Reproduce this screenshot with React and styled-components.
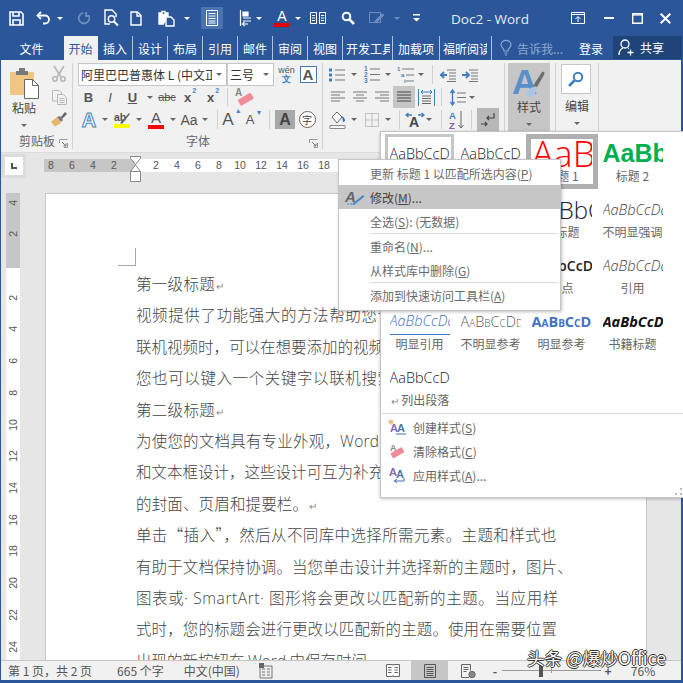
import styled, { createGlobalStyle } from 'styled-components';

const GlobalStyle = createGlobalStyle`
  html, body { margin: 0; padding: 0; background: #fff; }
  body { font-family: "Noto Sans CJK SC", "Liberation Sans", sans-serif; }
  * { box-sizing: border-box; }
`;

const Frame = styled.div`
  width: 683px;
  height: 683px;
  background: #2b579a;
  display: flex;
  flex-direction: column;
  position: relative;
  overflow: hidden;
`;

const TitleBar = styled.div`
  height: 36px;
  display: flex;
  align-items: center;
  flex: none;
`;
const Qat = styled.div`
  width: 430px;
  height: 100%;
  display: flex;
  align-items: center;
`;
const Slot = styled.span`
  width: ${p => p.$w}px;
  height: 22px;
  flex: none;
  display: flex;
  align-items: center;
  justify-content: center;
  background: ${p => (p.$on ? '#4a74b0' : 'none')};
`;
const WhiteCaret = styled.i`
  width: 0;
  height: 0;
  border-left: 3px solid transparent;
  border-right: 3px solid transparent;
  border-top: 3px solid ${p => p.$c || '#fff'};
`;
const DocTitle = styled.div`
  width: 120px;
  text-align: center;
  font: 13.5px "Open Sans", "Liberation Sans", sans-serif;
  color: #e6ecf5;
  padding-top: 1px;
`;
const WinControls = styled.div`
  margin-left: auto;
  display: flex;
  align-items: center;
`;

const TabBar = styled.div`
  height: 24px;
  display: flex;
  flex: none;
  align-items: stretch;
`;
const Tab = styled.div`
  width: ${p => p.$w}px;
  flex: none;
  overflow: hidden;
  white-space: nowrap;
  display: flex;
  align-items: center;
  justify-content: ${p => (p.$clip ? 'flex-start' : 'center')};
  padding-left: ${p => (p.$clip ? 3 : 0)}px;
  font-size: 12px;
  color: ${p => (p.$active ? '#2b579a' : '#fff')};
  background: ${p => (p.$active ? '#f1f1f1' : 'none')};
  border-right: 1px solid ${p => (p.$sep ? 'rgba(255,255,255,.65)' : 'transparent')};
`;
const TabClip = styled.span`
  width: 44px;
  overflow: hidden;
  flex: none;
`;
const TellMe = styled.div`
  margin-left: 8px;
  display: flex;
  align-items: center;
  gap: 5px;
  width: 79px;
  font-size: 12px;
  color: #8ea9d0;
`;
const SignIn = styled.div`
  width: 34px;
  display: flex;
  align-items: center;
  font-size: 12px;
  color: #fff;
`;
const Share = styled.div`
  width: 69px;
  margin-bottom: 1px;
  background: #1f4478;
  display: flex;
  align-items: center;
  gap: 5px;
  padding-left: 5px;
  font-size: 12px;
  color: #fff;
`;

const Body = styled.div`
  flex: 1;
  min-height: 0;
  margin: 0 2px 3px 1px;
  display: flex;
  flex-direction: column;
`;

const Ribbon = styled.div`
  height: 93px;
  flex: none;
  background: #f1f1f1;
  display: flex;
  border-bottom: 1px solid #dcdcdc;
`;
const Group = styled.div`
  width: ${p => p.$w}px;
  flex: none;
  display: flex;
  flex-direction: column;
  padding-top: 3px;
  position: relative;
  &::after {
    content: "";
    position: absolute;
    right: 0;
    top: 3px;
    bottom: 3px;
    width: 1px;
    background: #d2d2d2;
  }
`;
const GroupBody = styled.div`
  height: 68px;
  display: flex;
`;
const GroupLabel = styled.div`
  flex: 1;
  display: flex;
  align-items: center;
  justify-content: center;
  font-size: 12px;
  color: #666;
  padding-bottom: 2px;
  position: relative;
`;
const Launcher = styled.span`
  position: absolute;
  right: 5px;
  bottom: 4px;
  display: flex;
`;
const BigButton = styled.div`
  width: ${p => p.$w}px;
  height: ${p => p.$h || 68}px;
  flex: none;
  display: flex;
  flex-direction: column;
  align-items: center;
  padding-top: ${p => p.$pt || 0}px;
  font-size: 12px;
  color: #555;
  background: ${p => (p.$on ? '#c6c6c6' : 'none')};
`;
const BigLabel = styled.span`
  line-height: 16px;
  margin-top: ${p => p.$mt || 0}px;
  margin-bottom: 8px;
  color: #444;
`;
const SmallStack = styled.div`
  display: flex;
  flex-direction: column;
`;
const StackSlot = styled.span`
  width: 24px;
  height: 23px;
  display: flex;
  align-items: center;
  justify-content: center;
`;
const Rows = styled.div`
  display: flex;
  flex-direction: column;
  padding-left: ${p => p.$pl}px;
`;
const Row = styled.div`
  height: ${p => p.$h || 23}px;
  display: flex;
  align-items: stretch;
`;
const Tool = styled.span`
  width: ${p => p.$w}px;
  flex: none;
  display: flex;
  align-items: center;
  justify-content: center;
  background: ${p => p.$on || 'none'};
`;
const Sep = styled.i`
  width: 1px;
  flex: none;
  background: #d0d0d0;
  margin: 2px 0;
`;
const Caret = styled.i`
  width: 0;
  height: 0;
  flex: none;
  border-left: 3px solid transparent;
  border-right: 3px solid transparent;
  border-top: 3px solid #666;
`;
const Combo = styled.div`
  width: ${p => p.$w}px;
  flex: none;
  background: #fff;
  border: 1px solid #c6c6c6;
  display: flex;
  align-items: center;
  padding: 0 4px 0 2px;
  font-size: 12px;
  color: #333;
  white-space: nowrap;
  overflow: hidden;
  justify-content: space-between;
`;
const ComboText = styled.span`
  overflow: hidden;
  width: ${p => p.$w}px;
  flex: none;
`;
const Letter = styled.span`
  font: ${p => (p.$i ? 'italic ' : '')}${p => p.$b || 700} ${p => p.$s || 13}px "Liberation Sans", sans-serif;
  color: ${p => p.$c || '#555'};
  text-decoration: ${p => p.$d || 'none'};
  line-height: 1;
  display: inline-flex;
`;
const EffectLetter = styled.span`
  font: 700 20px "Liberation Sans", sans-serif;
  line-height: 1;
  color: #fff;
  -webkit-text-stroke: 1px #4a86c5;
  text-shadow: 0 0 2px #a9c8e8;
`;
const Sub = styled.sub`
  font-size: 7px;
  font-weight: 700;
  color: #4a86c5;
  vertical-align: ${p => (p.$up ? '5px' : '-1px')};
  line-height: 0;
  margin-left: 1px;
`;
const Ruby = styled.span`
  display: flex;
  flex-direction: column;
  align-items: center;
  line-height: 9px;
  font-size: 9px;
  color: #555;
  font-family: "Liberation Sans", sans-serif;
`;
const RubyBase = styled.span`
  color: #3f7fc0;
  font-weight: 700;
`;
const BoxA = styled.span`
  width: 17px;
  height: 17px;
  border: 1px solid #4a7ab0;
  background: #fff;
  display: flex;
  align-items: center;
  justify-content: center;
  font: 700 15px "Liberation Sans", sans-serif;
  color: #555;
`;
const ShadeA = styled(BoxA)`
  width: 20px;
  height: 19px;
  border: none;
  background: #a8a8a8;
  font-size: 16px;
  color: #444;
`;
const CircleChar = styled.span`
  width: 17px;
  height: 17px;
  border: 1px solid #666;
  border-radius: 50%;
  background: #fff;
  font-size: 10px;
  display: flex;
  align-items: center;
  justify-content: center;
  color: #444;
  flex: none;
`;
const BarLetter = styled.span`
  width: 16px;
  display: flex;
  flex-direction: column;
  align-items: center;
  line-height: 1;
`;
const Bar = styled.i`
  width: ${p => p.$w || 16}px;
  height: 4px;
  background: ${p => p.$c};
  flex: none;
`;
const EditBox = styled.span`
  width: 30px;
  height: 30px;
  margin: 1px 0 0 -2px;
  background: #fff;
  border: 1px solid #c6c6c6;
  display: flex;
  align-items: center;
  justify-content: center;
  flex: none;
`;

const Editor = styled.div`
  flex: 1;
  min-height: 0;
  background: #e6e6e6;
  position: relative;
  overflow: hidden;
`;
const RulerTop = styled.div`
  height: 40px;
  display: flex;
  padding-top: 1px;
`;
const Corner = styled.div`
  width: 25px;
  height: 24px;
  background: #dcdcdc;
  display: flex;
  align-items: center;
  justify-content: center;
  flex: none;
`;
const CornerInner = styled.div`
  width: 18px;
  height: 18px;
  background: #fff;
  display: flex;
  align-items: center;
  justify-content: center;
`;
const TabMark = styled.i`
  width: 6px;
  height: 6px;
  border-left: 2px solid #555;
  border-bottom: 2px solid #555;
`;
const HRuler = styled.div`
  margin: 5px 0 0 18px;
  width: 603px;
  height: 13px;
  background: linear-gradient(90deg, #c6c6c6 91px, #fff 91px);
  display: flex;
  position: relative;
`;
const HRulerNums = styled.div`
  margin-left: -3.5px;
  display: flex;
`;
const RulerNum = styled.span`
  width: 21px;
  flex: none;
  text-align: center;
  font: 10.5px/13px "Liberation Sans", sans-serif;
  color: #555;
`;
const IndentMark = styled.span`
  position: absolute;
  left: 86px;
  top: -3px;
  display: flex;
`;
const Workspace = styled.div`
  display: flex;
  height: 100%;
`;
const VRuler = styled.div`
  margin-left: 5px;
  width: 14px;
  height: 500px;
  flex: none;
  overflow: hidden;
  background: linear-gradient(180deg, #c6c6c6 75px, #fff 75px);
  display: flex;
  flex-direction: column;
`;
const VRulerNum = styled.span`
  height: 31.72px;
  flex: none;
  margin-top: ${p => p.$mt || 0}px;
  display: flex;
  align-items: center;
  justify-content: center;
  writing-mode: vertical-rl;
  transform: rotate(180deg);
  font: 10.5px "Liberation Sans", sans-serif;
  color: #555;
`;
const Page = styled.div`
  margin-left: 25px;
  width: 602px;
  height: 500px;
  flex: none;
  background: #fff;
  border: 1px solid #c6c6c6;
  border-bottom: none;
  padding-left: 90px;
  overflow: hidden;
`;
const CropMark = styled.div`
  margin: 54px 0 2px -18px;
  width: 18px;
  height: 18px;
  border-right: 1px solid #a8a8a8;
  border-bottom: 1px solid #a8a8a8;
`;
const Line = styled.div`
  height: 31.4px;
  line-height: 31.4px;
  font-size: 15.5px;
  font-weight: 300;
  letter-spacing: ${p => p.$ls || 0}px;
  color: #444;
  white-space: nowrap;
`;
const Latin = styled.span`
  font-family: "Open Sans", "Liberation Sans", sans-serif;
  font-weight: 300;
`;
const Para = styled.span`
  font-size: 10px;
  color: #888;
  margin-left: 1px;
`;

const Status = styled.div`
  height: 20px;
  flex: none;
  background: #f1f1f1;
  border-top: 1px solid #c6c6c6;
  display: flex;
  align-items: stretch;
  font-size: 12px;
  color: #555;
`;
const StatusText = styled.span`
  margin-left: ${p => p.$ml}px;
  display: flex;
  align-items: center;
  white-space: nowrap;
  flex: none;
`;
const StatusRight = styled.div`
  margin-left: auto;
  display: flex;
  align-items: stretch;
`;
const ViewBtn = styled.span`
  width: ${p => p.$w}px;
  display: flex;
  align-items: center;
  justify-content: center;
  padding-right: ${p => p.$pr || 0}px;
  background: ${p => (p.$on ? '#c6c6c6' : 'none')};
  font-weight: ${p => (p.$bold ? 700 : 400)};
`;
const Slider = styled.span`
  width: 99px;
  position: relative;
  display: flex;
  align-items: center;
`;
const Track = styled.i`
  width: 100%;
  height: 1px;
  background: #999;
`;
const Thumb = styled.i`
  position: absolute;
  left: 37px;
  top: 3px;
  width: 4px;
  height: 13px;
  background: #555;
`;
const Tick = styled.i`
  position: absolute;
  left: 49px;
  top: 7px;
  width: 1px;
  height: 5px;
  background: #999;
`;
const Watermark = styled.div`
  position: absolute;
  left: 527px;
  top: 646px;
  font-size: 17.5px;
  line-height: 24px;
  letter-spacing: .1px;
  color: #fff;
  white-space: nowrap;
  text-shadow: 1px 0 0 #333, -1px 0 0 #333, 0 1px 0 #333, 0 -1px 0 #333;
`;

const Gallery = styled.div`
  position: absolute;
  left: 380px;
  top: 131px;
  width: 303px;
  height: 367px;
  background: #fff;
  border: 1px solid #c6c6c6;
  border-right: none;
  box-shadow: 0 1px 3px rgba(0, 0, 0, .25);
  padding: 2px 0 0 4px;
`;
const StyleGrid = styled.div`
  display: grid;
  grid-template-columns: repeat(4, 71px);
  grid-auto-rows: 56px;
`;
const StyleItem = styled.div`
  width: ${p => (p.$sel === 'dark' ? 72 : 69)}px;
  height: 55px;
  border: ${p => (p.$sel === 'dark' ? '5px solid #b0b0b0' : p.$sel === 'light' ? '3px solid #c6c6c6' : '3px solid transparent')};
  margin-left: ${p => (p.$sel === 'dark' ? -1 : 0)}px;
  display: flex;
  flex-direction: column;
  align-items: center;
  padding-top: ${p => (p.$sel === 'dark' ? 0 : 2)}px;
`;
const Sample = styled.div`
  width: 60px;
  height: 28px;
  flex: none;
  overflow: hidden;
  white-space: nowrap;
  display: flex;
  align-items: center;
  font-family: ${p => p.$font || '"Open Sans"'}, "Liberation Sans", sans-serif;
  font-size: ${p => p.$s || 14.5}px;
  font-weight: ${p => p.$b || 300};
  font-style: ${p => (p.$i ? 'italic' : 'normal')};
  font-variant: ${p => (p.$caps ? 'small-caps' : 'normal')};
  color: ${p => p.$c || '#222'};
  border-bottom: ${p => (p.$ul ? '1px solid #4472c4' : 'none')};
`;
const StyleLabel = styled.div`
  font-size: 12px;
  line-height: 17px;
  color: #666;
  white-space: nowrap;
`;
const GalleryMenu = styled.div`
  margin: -1px 0 0 -4px;
  border-top: 1px solid #d9d9d9;
  padding-top: 1px;
`;
const GalleryEntry = styled.div`
  height: 24px;
  display: flex;
  align-items: center;
  font-size: 12px;
  color: #666;
`;
const EntryIcon = styled.span`
  width: 32px;
  display: flex;
  justify-content: center;
  flex: none;
`;
const Grip = styled.span`
  position: absolute;
  right: 1px;
  bottom: 2px;
  display: flex;
`;

const ContextMenu = styled.div`
  position: absolute;
  left: 338px;
  top: 159px;
  width: 223px;
  height: 152px;
  background: #fff;
  border: 1px solid #c6c6c6;
  box-shadow: 1px 1px 3px rgba(0, 0, 0, .25);
  padding-top: 1px;
`;
const MenuItem = styled.div`
  height: 24px;
  display: flex;
  align-items: center;
  font-size: 12px;
  color: ${p => (p.$on ? '#444' : '#6a6a6a')};
  background: ${p => (p.$on ? '#c6c6c6' : 'none')};
`;
const MenuIcon = styled.span`
  width: 31px;
  flex: none;
  display: flex;
  justify-content: center;
`;
const MenuSep = styled.div`
  height: 1px;
  margin: 0 2px 0 31px;
  background: #d9d9d9;
`;

const Svg = styled.svg`
  display: block;
  flex: none;
  overflow: visible;
`;

const W = { fill: 'none', stroke: '#fff', strokeWidth: 1.4 };

const SaveIcon = () => (
  <Svg width="15" height="15" viewBox="0 0 15 15" {...W} strokeWidth="1.6">
    <path d="M1 1h11l2 2v11H1z" />
    <path d="M4 1v4h6V1M4 14V9h7v5" />
  </Svg>
);
const UndoIcon = () => (
  <Svg width="15" height="14" viewBox="0 0 15 14" {...W} strokeWidth="1.8">
    <path d="M5 1L1.500 4.500 5 8" />
    <path d="M2 4.500h7a4 4 0 0 1 0 8H7" />
  </Svg>
);
const RedoIcon = () => (
  <Svg width="13" height="14" viewBox="0 0 13 14" fill="none" stroke="#6c8dbd" strokeWidth="1.8">
    <path d="M10 2.500a5.300 5.300 0 1 1-6 0" transform="rotate(25 6.500 7)" />
    <path d="M9 1v4h3.500" />
  </Svg>
);
const PreviewIcon = () => (
  <Svg width="15" height="18" viewBox="0 0 15 18" {...W}>
    <path d="M6 15H1V1h7l4 4v3" />
    <circle cx="7.500" cy="10" r="3.200" />
    <path d="M10 12.500L14 16.500" strokeWidth="2" />
  </Svg>
);
const NewIcon = () => (
  <Svg width="12" height="15" viewBox="0 0 12 15" {...W}>
    <path d="M1 1h6.500L11 4.500V14H1z" />
    <path d="M7 1v4h4" />
  </Svg>
);
const PasteQat = () => (
  <Svg width="17" height="17" viewBox="0 0 17 17" {...W}>
    <path d="M6 14H1V3h9v4" fill="#fff" />
    <path d="M4 4V1.500h3V4" fill="#2b579a" />
    <path d="M8 7h5l3 3v6H8z" fill="#2b579a" />
  </Svg>
);
const DraftIcon = () => (
  <Svg width="12" height="16" viewBox="0 0 12 16" {...W} strokeWidth="1">
    <path d="M.500.500h11v15H.500z" />
    <path d="M2.500 3.500h7M2.500 6h7M2.500 8.500h7M2.500 11h7M2.500 13h7" />
  </Svg>
);
const OutlineIcon = () => (
  <Svg width="13" height="16" viewBox="0 0 13 16" {...W} strokeWidth="1.2">
    <path d="M1.500 0v16" />
    <path d="M4 2h5v4H4z" fill="#fff" />
    <path d="M4 8h8M4 11h8" />
    <path d="M9 14H3.500M5.500 12l-2 2 2 2" />
  </Svg>
);
const ColumnsIcon = () => (
  <Svg width="16" height="12" viewBox="0 0 16 12" {...W} strokeWidth="1">
    <path d="M.500.500h6v11h-6zM9.500.500h6v11h-6z" />
    <path d="M2 3.500h3M2 6h3M2 8.500h3M11 3.500h3M11 6h3M11 8.500h3" />
  </Svg>
);
const SearchWhite = () => (
  <Svg width="14" height="14" viewBox="0 0 14 14" {...W} strokeWidth="2">
    <circle cx="5.500" cy="5.500" r="3.800" />
    <path d="M8.500 8.500l4.500 4.500" strokeWidth="2.500" />
  </Svg>
);
const EditGrey = () => (
  <Svg width="16" height="13" viewBox="0 0 16 13" fill="none" stroke="#6c8dbd" strokeWidth="1">
    <path d="M.500.500h11v10H.500z" />
    <path d="M6 9l7-7 2 1-7 7-2.500.500z" fill="#6c8dbd" />
  </Svg>
);
const CustomizeIcon = () => (
  <Svg width="7" height="8" viewBox="0 0 7 8" fill="#fff">
    <path d="M0 0h7v1.500H0zM0 4h7L3.500 7.500z" />
  </Svg>
);
const RibbonOpt = () => (
  <Svg width="14" height="12" viewBox="0 0 14 12" {...W} strokeWidth="1">
    <path d="M.500.500h13v11H.500zM.500 2.500h13" />
    <path d="M7 10V5M4.500 7L7 4.500 9.500 7" />
  </Svg>
);
const MinIcon = () => (
  <Svg width="10" height="2" viewBox="0 0 10 2"><path d="M0 0h10v2H0z" fill="#fff" /></Svg>
);
const MaxIcon = () => (
  <Svg width="11" height="11" viewBox="0 0 11 11" {...W}>
    <path d="M.700.700h9.600v9.600H.700z" />
    <path d="M0 2h11" strokeWidth="1.200" />
  </Svg>
);
const CloseIcon = () => (
  <Svg width="11" height="11" viewBox="0 0 11 11" {...W} strokeWidth="2">
    <path d="M.700.700l9.600 9.600M10.300.700L.700 10.300" />
  </Svg>
);
const BulbIcon = () => (
  <Svg width="12" height="16" viewBox="0 0 12 16" fill="none" stroke="#8ea9d0" strokeWidth="1.2">
    <path d="M4 11c0-3-3-3.500-3-6.200a5 4.500 0 0 1 10 0C11 7.500 8 8 8 11z" />
    <path d="M4.500 13h3M5 15h2" />
  </Svg>
);
const PersonIcon = () => (
  <Svg width="17" height="17" viewBox="0 0 17 17" {...W} strokeWidth="1.3">
    <circle cx="7" cy="5" r="4" />
    <path d="M1 16c0-4 2-6 4-7M10 9l1 .5" />
    <path d="M12.500 10.500v6M9.500 13.500h6" />
  </Svg>
);

const PasteIcon = () => (
  <Svg width="29" height="31" viewBox="0 0 29 31">
    <path d="M0 4h24v23H0z" fill="#efc77f" />
    <path d="M6 3h3V0h6v3h3v4H6z" fill="#77787a" />
    <path d="M14.500 11.500h8l6 6v13h-14z" fill="#fff" stroke="#666" />
    <path d="M22.500 11.500v6h6" fill="none" stroke="#666" />
  </Svg>
);
const CutIcon = () => (
  <Svg width="14" height="16" viewBox="0 0 14 16" fill="none" stroke="#b4b4b4" strokeWidth="1.500">
    <circle cx="3" cy="13" r="2.200" />
    <circle cx="11" cy="13" r="2.200" />
    <path d="M2 0l7 11M12 0L5 11" />
  </Svg>
);
const CopyIcon = () => (
  <Svg width="15" height="15" viewBox="0 0 15 15" fill="#f1f1f1" stroke="#b8b8b8">
    <path d="M.500.500h7l2 2V11H.500z" />
    <path d="M5.500 4.500h6l3 3v7h-9z" />
    <path d="M7.500 8.500h5M7.500 10.500h5M7.500 12.500h5" />
  </Svg>
);
const BrushIcon = () => (
  <Svg width="16" height="15" viewBox="0 0 16 15">
    <path d="M0 10l6-5 4 6-6 3.500z" fill="#e9b66e" />
    <path d="M6 5l4 5 2-2-3-4z" fill="#777" />
    <path d="M10 5l4-5 2 2-5 5z" fill="#666" />
  </Svg>
);
const LauncherIcon = () => (
  <Svg width="9" height="9" viewBox="0 0 9 9" fill="none" stroke="#777">
    <path d="M.500 4V.500H8.500M8.500.500v0M8.500 4v4.500H5" stroke="#999" />
    <path d="M3 3l4 4M7 4.500V7H4.500" />
  </Svg>
);
const EraserIcon = () => (
  <Svg width="20" height="20" viewBox="0 0 20 20">
    <text x="1" y="9" fontSize="10" fontFamily="Liberation Sans" fontWeight="700" fill="#888">A</text>
    <rect x="4" y="9" width="15" height="7" rx="1" fill="#ee8c97" transform="rotate(-30 11 12)" />
  </Svg>
);
const HighlightIcon = () => (
  <Svg width="16" height="12" viewBox="0 0 16 12">
    <text x="0" y="9" fontSize="10.500" fontFamily="Liberation Sans" fontWeight="700" fill="#555">ab</text>
    <path d="M6 11l9-10 1 1-8 10z" fill="#666" />
  </Svg>
);
const StrokeLines = ({ d, c = '#777' }) => (
  <Svg width="16" height="14" viewBox="0 0 16 14" fill="none" stroke={c} strokeWidth="1">
    <path d={d} />
  </Svg>
);
const BulletsIcon = () => (
  <Svg width="16" height="16" viewBox="0 0 16 16">
    <path d="M6 3h10M6 8h10M6 13h10" stroke="#777" />
    <g fill="#3f7fc0"><rect x="0" y="1.500" width="3" height="3" /><rect x="0" y="6.500" width="3" height="3" /><rect x="0" y="11.500" width="3" height="3" /></g>
  </Svg>
);
const NumbersIcon = () => (
  <Svg width="16" height="17" viewBox="0 0 16 17">
    <path d="M6 3h10M6 8.500h10M6 14h10" stroke="#777" />
    <g fontSize="6.500" fontWeight="700" fontFamily="Liberation Sans" fill="#3f7fc0"><text x="0" y="5">1</text><text x="0" y="11">2</text><text x="0" y="17">3</text></g>
  </Svg>
);
const MultiIcon = () => (
  <Svg width="17" height="17" viewBox="0 0 17 17">
    <path d="M5 3h12M9 9h8M9 15h8" stroke="#777" />
    <g fontSize="6" fontWeight="700" fontFamily="Liberation Sans" fill="#3f7fc0"><text x="0" y="5">1</text><text x="4" y="11">a</text><text x="7" y="17">i</text></g>
  </Svg>
);
const OutdentIcon = () => (
  <Svg width="16" height="14" viewBox="0 0 16 14">
    <path d="M7 2h9M9 5h7M9 8h7M9 11h7M7 13.500h9" stroke="#777" />
    <path d="M0 7h7M4 4L1 7l3 3" stroke="#3f7fc0" strokeWidth="1.800" fill="none" />
  </Svg>
);
const IndentIcon = () => (
  <Svg width="16" height="14" viewBox="0 0 16 14">
    <path d="M7 2h9M9 5h7M9 8h7M9 11h7M7 13.500h9" stroke="#777" />
    <path d="M0 7h7M4 4l3 3-3 3" stroke="#3f7fc0" strokeWidth="1.800" fill="none" />
  </Svg>
);
const DistIcon = () => (
  <Svg width="17" height="17" viewBox="0 0 17 17">
    <path d="M4 7h9M4 9.500h9M4 12h9M4 14.500h9" stroke="#666" />
    <path d="M.500 0v17M16.500 0v17" stroke="#3f7fc0" />
    <path d="M3 3h11M5 1L3 3l2 2M12 1l2 2-2 2" stroke="#3f7fc0" fill="none" />
  </Svg>
);
const SpacingIcon = () => (
  <Svg width="16" height="17" viewBox="0 0 16 17">
    <path d="M7 4h9M7 8.500h9M7 13h9" stroke="#777" />
    <path d="M2.500 1v15M.500 4l2-3 2 3M.500 13l2 3 2-3" stroke="#3f7fc0" strokeWidth="1.400" fill="none" />
  </Svg>
);
const ShadeIcon = () => (
  <Svg width="16" height="18" viewBox="0 0 16 18">
    <path d="M7 1l5 5-5 6-5-6z" fill="#fff" stroke="#666" />
    <path d="M12 5c2 1 3 3 3 5l-2 1z" fill="#2f6fb0" />
    <path d="M0 14.500h15v3H0z" fill="#fff" stroke="#888" />
  </Svg>
);
const BorderIcon = () => (
  <Svg width="14" height="14" viewBox="0 0 14 14" fill="none" stroke="#999" strokeDasharray="1 1">
    <path d="M.500.500h13v13H.500zM7 .500v13M.500 7h13" />
  </Svg>
);
const AsianIcon = () => (
  <Svg width="20" height="15" viewBox="0 0 20 15">
    <text x="4" y="15" fontSize="14" fontWeight="700" fontFamily="Liberation Sans" fill="#444">A</text>
    <path d="M1 3h6M3.500 1L1 3l2.500 2M13 3h6M16.500 1L19 3l-2.500 2" stroke="#3f7fc0" strokeWidth="1.300" fill="none" />
  </Svg>
);
const SortIcon = () => (
  <Svg width="16" height="18" viewBox="0 0 16 18">
    <text x="0" y="8" fontSize="9.500" fontWeight="700" fontFamily="Liberation Sans" fill="#3f7fc0">A</text>
    <text x="0" y="17.500" fontSize="9.500" fontWeight="700" fontFamily="Liberation Sans" fill="#8a5aa8">Z</text>
    <path d="M12 0v17M9.500 14l2.500 3 2.500-3" stroke="#666" fill="none" />
  </Svg>
);
const PilcrowIcon = () => (
  <Svg width="14" height="14" viewBox="0 0 14 14" fill="none" stroke="#444" strokeWidth="1.200">
    <path d="M13 0v5H6M8 3L6 5l2 2" />
    <path d="M0 11h6M4 9l2 2-2 2" />
  </Svg>
);
const StylesIcon = () => (
  <Svg width="32" height="32" viewBox="0 0 32 32">
    <text x="-1" y="27" fontSize="35" fontWeight="700" fontFamily="Liberation Sans" fill="#5a8fca">A</text>
    <path d="M20 19L29 5c2-1 3 0 2 3l-7 12z" fill="#6e6e6e" />
    <path d="M13 29c1-5 4-9 8-9l3 2c-1 4-4 8-7 8z" fill="#a8c6e4" />
  </Svg>
);
const SearchBlue = () => (
  <Svg width="16" height="16" viewBox="0 0 16 16" fill="none" stroke="#3f7fc0">
    <circle cx="10" cy="6" r="4.200" strokeWidth="2" />
    <path d="M6.500 9.500L1 15" strokeWidth="2.600" />
  </Svg>
);
const ModifyIcon = () => (
  <Svg width="22" height="17" viewBox="0 0 22 17">
    <text x="1" y="13" fontSize="15" fontStyle="italic" fontWeight="700" fontFamily="Liberation Sans" fill="#666">A</text>
    <path d="M8 15L19 6l1.500 1.500L10 16z" fill="#4a86c5" />
    <path d="M3 15h8" stroke="#4a86c5" strokeDasharray="2 1" />
  </Svg>
);
const NewStyleIcon = () => (
  <Svg width="18" height="16" viewBox="0 0 18 16">
    <path d="M3 0v6M0 3h6M1 1l4 4M5 1L1 5" stroke="#e3b76b" />
    <text x="2" y="13" fontSize="11" fontWeight="700" fontFamily="Liberation Sans" fill="#8a6ab0">A</text>
    <text x="9" y="13" fontSize="11" fontWeight="700" fontFamily="Liberation Sans" fill="#4a7ab0">A</text>
    <path d="M8 15h10" stroke="#3f6fb0" />
  </Svg>
);
const ClearIcon = () => (
  <Svg width="16" height="16" viewBox="0 0 16 16">
    <text x="1" y="8" fontSize="9" fontWeight="700" fontFamily="Liberation Sans" fill="#888">A</text>
    <rect x="2" y="7" width="13" height="6" rx="1" fill="#ee8c97" transform="rotate(-30 8 10)" />
  </Svg>
);
const ApplyIcon = () => (
  <Svg width="17" height="17" viewBox="0 0 17 17">
    <text x="0" y="9" fontSize="11" fontWeight="700" fontFamily="Liberation Sans" fill="#8a6ab0">A</text>
    <text x="7" y="11" fontSize="11" fontWeight="700" fontFamily="Liberation Sans" fill="#4a7ab0">A</text>
    <path d="M5 14h10M8 12l-2.500 2L8 16M15 11v3" stroke="#3f6fb0" fill="none" />
  </Svg>
);
const HourGlass = () => (
  <Svg width="11" height="26" viewBox="0 0 11 26" fill="#fff" stroke="#888">
    <path d="M.500.500h10v2l-5 6-5-6z" />
    <path d="M.500 15.500h10v10H.500z" />
    <path d="M5.500 9l5 6.500h-10z" />
  </Svg>
);
const MacroIcon = () => (
  <Svg width="14" height="16" viewBox="0 0 14 16">
    <path d="M1 3h12v12H1z" fill="#eee" stroke="#777" />
    <path d="M3 6h3M8 6h3M3 9h3M8 9h3M3 12h3M8 12h3" stroke="#777" />
    <path d="M0 0h5v5H0z" fill="#666" />
  </Svg>
);
const ReadIcon = () => (
  <Svg width="14" height="13" viewBox="0 0 14 13" fill="#fff" stroke="#666">
    <path d="M.500.500h6l.500 1 .500-1h6v12h-6l-.500-1-.500 1h-6z" />
    <path d="M2 3.500h3.500M2 6h3.500M2 8.500h3.500M8.500 3.500H12M8.500 6H12M8.500 8.500H12" />
  </Svg>
);
const PrintIcon = () => (
  <Svg width="12" height="14" viewBox="0 0 12 14" fill="none" stroke="#555">
    <path d="M.500.500h11v13H.500z" />
    <path d="M2.500 3.500h7M2.500 5.500h7M2.500 7.500h7M2.500 9.500h7M2.500 11.500h7" />
  </Svg>
);
const WebIcon = () => (
  <Svg width="15" height="14" viewBox="0 0 15 14" fill="none" stroke="#666">
    <path d="M8 13.500H.500V.500h9v6" />
    <path d="M2.500 3.500h5M2.500 5.500h5M2.500 7.500h3" />
    <circle cx="11" cy="10.500" r="3.200" fill="#888" />
  </Svg>
);
const GripIcon = () => (
  <Svg width="7" height="7" viewBox="0 0 7 7" fill="#bbb">
    <path d="M5 0h2v2H5zM0 5h2v2H0zM5 5h2v2H5z" />
  </Svg>
);

const bodyLines = [
  { t: <>第一级标题<Para>↵</Para></>, ls: 0.3 },
  { t: '视频提供了功能强大的方法帮助您证明您的观点。当您单击', ls: 0.6 },
  { t: '联机视频时，可以在想要添加的视频的嵌入代码中进行粘贴。' },
  { t: '您也可以键入一个关键字以联机搜索最适合您的文档的视频。', ls: 0.6 },
  { t: <>第二级标题<Para>↵</Para></>, ls: 0.3 },
  { t: <>为使您的文档具有专业外观，<Latin>Word</Latin> 提供了页眉、页脚、封面</>, ls: 0.2 },
  { t: '和文本框设计，这些设计可互为补充。例如，您可以添加匹配' },
  { t: <>的封面、页眉和提要栏。<Para>↵</Para></>, ls: 0.15 },
  { t: '单击“插入”，然后从不同库中选择所需元素。主题和样式也', ls: 0.37 },
  { t: '有助于文档保持协调。当您单击设计并选择新的主题时，图片、', ls: 0.1 },
  { t: <>图表或<Latin>· SmartArt· </Latin>图形将会更改以匹配新的主题。当应用样</>, ls: 0.6 },
  { t: '式时，您的标题会进行更改以匹配新的主题。使用在需要位置', ls: 0.1 },
  { t: <>出现的新按钮在 <Latin>Word</Latin> 中保存时间。</> },
];

const styleItems = [
  { name: '正文', sel: 'light', text: 'AaBbCcDd' },
  { name: '无间隔', text: 'AaBbCcDd' },
  { name: '标题 1', sel: 'dark', text: 'AaBb', s: 36, c: '#ff0000', b: 300 },
  { name: '标题 2', text: 'AaBb', s: 25, c: '#00b050', b: 700, font: '"Liberation Sans"' },
  { name: '标题 3', text: 'AaBbCcDd' },
  { name: '标题', text: 'AaBb', s: 24 },
  { name: '副标题', text: 'AaBbC', s: 24 },
  { name: '不明显强调', text: 'AaBbCcDd', i: true, c: '#444' },
  { name: '强调', text: 'AaBbCcDd', i: true },
  { name: '明显强调', text: 'AaBbCcDd', i: true, c: '#4472c4' },
  { name: '要点', text: 'AaBbCcD', b: 600, s: 14 },
  { name: '引用', text: 'AaBbCcDd', i: true, c: '#444' },
  { name: '明显引用', text: 'AaBbCcDd', i: true, c: '#4472c4', ul: true },
  { name: '不明显参考', text: 'AaBbCcDd', caps: true, c: '#595959' },
  { name: '明显参考', text: 'AaBbCcDd', caps: true, c: '#4472c4', b: 700 },
  { name: '书籍标题', text: 'AaBbCcD', i: true, b: 700, c: '#111' },
  { name: <><Para>↵</Para> 列出段落</>, text: 'AaBbCcDd' },
];

const CaretTool = ({ w }) => <Tool $w={w}><Caret /></Tool>;

export default function App() {
  return (
    <>
      <GlobalStyle />
      <Frame>
        <TitleBar>
          <Qat>
            <Slot $w={32}><SaveIcon /></Slot>
            <Slot $w={22}><UndoIcon /></Slot>
            <Slot $w={12}><WhiteCaret /></Slot>
            <Slot $w={34}><RedoIcon /></Slot>
            <Slot $w={22}><PreviewIcon /></Slot>
            <Slot $w={28}><NewIcon /></Slot>
            <Slot $w={32}><PasteQat /></Slot>
            <Slot $w={9}><WhiteCaret /></Slot>
            <Slot $w={10} />
            <Slot $w={22} $on><DraftIcon /></Slot>
            <Slot $w={14} />
            <Slot $w={16}><OutlineIcon /></Slot>
            <Slot $w={12}><WhiteCaret /></Slot>
            <Slot $w={6} />
            <Slot $w={22}>
              <BarLetter>
                <Letter $s={14} $b={400} $c="#fff">A</Letter>
                <Bar $c="#e00000" $w={16} />
              </BarLetter>
            </Slot>
            <Slot $w={9}><WhiteCaret /></Slot>
            <Slot $w={32}><ColumnsIcon /></Slot>
            <Slot $w={27}><SearchWhite /></Slot>
            <Slot $w={31}><EditGrey /></Slot>
            <Slot $w={10}><WhiteCaret $c="#6c8dbd" /></Slot>
            <Slot $w={28}><CustomizeIcon /></Slot>
          </Qat>
          <DocTitle>Doc2 - Word</DocTitle>
          <WinControls>
            <Slot $w={28}><RibbonOpt /></Slot>
            <Slot $w={34}><MinIcon /></Slot>
            <Slot $w={22}><MaxIcon /></Slot>
            <Slot $w={35}><CloseIcon /></Slot>
          </WinControls>
        </TitleBar>

        <TabBar>
          <Tab $w={64}>文件</Tab>
          <Tab $w={34} $active>开始</Tab>
          <Tab $w={35} $sep>插入</Tab>
          <Tab $w={35} $sep>设计</Tab>
          <Tab $w={35} $sep>布局</Tab>
          <Tab $w={35} $sep>引用</Tab>
          <Tab $w={35} $sep>邮件</Tab>
          <Tab $w={35} $sep>审阅</Tab>
          <Tab $w={35} $sep>视图</Tab>
          <Tab $w={50} $sep $clip><TabClip>开发工具</TabClip></Tab>
          <Tab $w={47} $sep>加载项</Tab>
          <Tab $w={52} $sep $clip><TabClip>福昕阅读器</TabClip></Tab>
          <TellMe><BulbIcon />告诉我...</TellMe>
          <SignIn>登录</SignIn>
          <Share><PersonIcon />共享</Share>
        </TabBar>

        <Body>
          <Ribbon>
            <Group $w={72}>
              <GroupBody>
                <BigButton $w={46} $pt={5}>
                  <PasteIcon />
                  <BigLabel $mt={1}>粘贴</BigLabel>
                  <Caret />
                </BigButton>
                <SmallStack>
                  <StackSlot><CutIcon /></StackSlot>
                  <StackSlot><CopyIcon /></StackSlot>
                  <StackSlot><BrushIcon /></StackSlot>
                </SmallStack>
              </GroupBody>
              <GroupLabel>剪贴板<Launcher><LauncherIcon /></Launcher></GroupLabel>
            </Group>

            <Group $w={250}>
              <GroupBody>
                <Rows $pl={5}>
                  <Row>
                    <Combo $w={149}>
                      <ComboText $w={131}>阿里巴巴普惠体 L (中文正文)</ComboText>
                      <Caret />
                    </Combo>
                    <Combo $w={47}>三号<Caret /></Combo>
                    <Tool $w={25}>
                      <Ruby>wén<RubyBase>文</RubyBase></Ruby>
                    </Tool>
                    <Tool $w={18}><BoxA>A</BoxA></Tool>
                  </Row>
                  <Row $h={22}>
                    <Tool $w={21}><Letter $s={13}>B</Letter></Tool>
                    <Tool $w={22}><Letter $s={13} $i $b={400}>I</Letter></Tool>
                    <Tool $w={23}><Letter $s={13} $d="underline">U</Letter></Tool>
                    <CaretTool w={11} />
                    <Tool $w={24}><Letter $s={11} $b={400} $d="line-through">abc</Letter></Tool>
                    <Tool $w={22}><Letter $s={13}>x<Sub>2</Sub></Letter></Tool>
                    <Tool $w={24}><Letter $s={13}>x<Sub $up>2</Sub></Letter></Tool>
                    <Tool $w={2} />
                    <Sep />
                    <Tool $w={32}><EraserIcon /></Tool>
                  </Row>
                  <Row>
                    <Tool $w={22}><EffectLetter>A</EffectLetter></Tool>
                    <CaretTool w={9} />
                    <Tool $w={26}>
                      <BarLetter>
                        <HighlightIcon />
                        <Bar $c="#ffff00" />
                      </BarLetter>
                    </Tool>
                    <CaretTool w={7} />
                    <Tool $w={28}>
                      <BarLetter>
                        <Letter $s={15} $b={400}>A</Letter>
                        <Bar $c="#ff0000" />
                      </BarLetter>
                    </Tool>
                    <CaretTool w={5} />
                    <Tool $w={28}><Letter $s={14} $b={400}>Aa</Letter></Tool>
                    <CaretTool w={4} />
                    <Tool $w={10} />
                    <Sep />
                    <Tool $w={28}><Letter $s={17} $b={400}>A<Sub $up>▲</Sub></Letter></Tool>
                    <Tool $w={16}><Letter $s={13} $b={400}>A<Sub $up>▼</Sub></Letter></Tool>
                    <Tool $w={7} />
                    <Sep />
                    <Tool $w={30}><ShadeA>A</ShadeA></Tool>
                    <Tool $w={14}><CircleChar>字</CircleChar></Tool>
                  </Row>
                </Rows>
              </GroupBody>
              <GroupLabel>字体<Launcher><LauncherIcon /></Launcher></GroupLabel>
            </Group>

            <Group $w={182}>
              <GroupBody>
                <Rows $pl={4}>
                  <Row>
                    <Tool $w={20}><BulletsIcon /></Tool>
                    <CaretTool w={14} />
                    <Tool $w={22}><NumbersIcon /></Tool>
                    <CaretTool w={10} />
                    <Tool $w={24}><MultiIcon /></Tool>
                    <CaretTool w={7} />
                    <Tool $w={8} />
                    <Sep />
                    <Tool $w={4} />
                    <Tool $w={22}><OutdentIcon /></Tool>
                    <Tool $w={22}><IndentIcon /></Tool>
                  </Row>
                  <Row $h={22}>
                    <Tool $w={22}><StrokeLines d="M1 2h14M1 5h9M1 8h14M1 11h9" /></Tool>
                    <Tool $w={22}><StrokeLines d="M1 2h14M4 5h8M1 8h14M4 11h8" /></Tool>
                    <Tool $w={22}><StrokeLines d="M1 2h14M6 5h9M1 8h14M6 11h9" /></Tool>
                    <Tool $w={22} $on="#c6c6c6"><StrokeLines c="#444" d="M1 2h14M1 5h14M1 8h14M1 11h14" /></Tool>
                    <Tool $w={22}><DistIcon /></Tool>
                    <Tool $w={4} />
                    <Sep />
                    <Tool $w={8} />
                    <Tool $w={16}><SpacingIcon /></Tool>
                    <CaretTool w={12} />
                  </Row>
                  <Row>
                    <Tool $w={22}><ShadeIcon /></Tool>
                    <CaretTool w={10} />
                    <Tool $w={2} />
                    <Tool $w={22}><BorderIcon /></Tool>
                    <CaretTool w={10} />
                    <Tool $w={6} />
                    <Sep />
                    <Tool $w={4} />
                    <Tool $w={22}><AsianIcon /></Tool>
                    <CaretTool w={6} />
                    <Tool $w={9} />
                    <Sep />
                    <Tool $w={5} />
                    <Tool $w={20}><SortIcon /></Tool>
                    <Tool $w={4} />
                    <Sep />
                    <Tool $w={5} />
                    <Tool $w={22} $on="#b8b8b8"><PilcrowIcon /></Tool>
                  </Row>
                </Rows>
              </GroupBody>
              <GroupLabel>段落</GroupLabel>
            </Group>

            <Group $w={51}>
              <GroupBody>
                <Tool $w={3} />
                <BigButton $w={42} $h={72} $on $pt={4}>
                  <StylesIcon />
                  <BigLabel $mt={0}>样式</BigLabel>
                  <Caret />
                </BigButton>
              </GroupBody>
            </Group>

            <Group $w={43}>
              <GroupBody>
                <BigButton $w={42}>
                  <EditBox><SearchBlue /></EditBox>
                  <BigLabel $mt={4}>编辑</BigLabel>
                  <Caret />
                </BigButton>
              </GroupBody>
            </Group>
          </Ribbon>

          <Editor>
            <RulerTop>
              <Corner>
                <CornerInner><TabMark /></CornerInner>
              </Corner>
              <HRuler>
                <HRulerNums>
                  {[8, 6, 4, 2, '', 2, 4, 6, 8, 10, 12, 14, 16, 18, 20, 22, 24, 26, 28, 30, 32, 34, 36, 38, 40, 42, 44, 46].map((n, i) => (
                    <RulerNum key={i}>{n}</RulerNum>
                  ))}
                </HRulerNums>
                <IndentMark><HourGlass /></IndentMark>
              </HRuler>
            </RulerTop>
            <Workspace>
              <VRuler>
                {[4, 2, '', 2, 4, 6, 8, 10, 12, 14, 16, 18, 20, 22, 24, 26].map((n, i) => (
                  <VRulerNum key={i} $mt={i === 0 ? -6.5 : 0}>{n}</VRulerNum>
                ))}
              </VRuler>
              <Page>
                <CropMark />
                {bodyLines.map((l, i) => <Line key={i} $ls={l.ls}>{l.t}</Line>)}
              </Page>
            </Workspace>
          </Editor>

          <Status>
            <StatusText $ml={7}>第 1 页，共 2 页</StatusText>
            <StatusText $ml={25}>665 个字</StatusText>
            <StatusText $ml={20}>中文(中国)</StatusText>
            <StatusText $ml={19}><MacroIcon /></StatusText>
            <StatusRight>
              <ViewBtn $w={37}><ReadIcon /></ViewBtn>
              <ViewBtn $w={37} $on><PrintIcon /></ViewBtn>
              <ViewBtn $w={40}><WebIcon /></ViewBtn>
              <ViewBtn $w={14} $bold>-</ViewBtn>
              <Slider><Track /><Tick /><Thumb /></Slider>
              <ViewBtn $w={14} $bold>+</ViewBtn>
              <ViewBtn $w={66} $pr={10}>76%</ViewBtn>
            </StatusRight>
          </Status>
        </Body>

        <Gallery>
          <StyleGrid>
            {styleItems.map((it, i) => (
              <StyleItem key={i} $sel={it.sel}>
                <Sample $s={it.s} $c={it.c} $b={it.b} $i={it.i} $caps={it.caps} $ul={it.ul} $font={it.font}>{it.text}</Sample>
                <StyleLabel>{it.name}</StyleLabel>
              </StyleItem>
            ))}
          </StyleGrid>
          <GalleryMenu>
            <GalleryEntry><EntryIcon><NewStyleIcon /></EntryIcon>创建样式(<u>S</u>)</GalleryEntry>
            <GalleryEntry><EntryIcon><ClearIcon /></EntryIcon>清除格式(<u>C</u>)</GalleryEntry>
            <GalleryEntry><EntryIcon><ApplyIcon /></EntryIcon>应用样式(<u>A</u>)...</GalleryEntry>
          </GalleryMenu>
          <Grip><GripIcon /></Grip>
        </Gallery>

        <ContextMenu>
          <MenuItem><MenuIcon />更新 标题 1 以匹配所选内容(<u>P</u>)</MenuItem>
          <MenuItem $on><MenuIcon><ModifyIcon /></MenuIcon>修改(<u>M</u>)...</MenuItem>
          <MenuItem><MenuIcon />全选(<u>S</u>): (无数据)</MenuItem>
          <MenuSep />
          <MenuItem><MenuIcon />重命名(<u>N</u>)...</MenuItem>
          <MenuItem><MenuIcon />从样式库中删除(<u>G</u>)</MenuItem>
          <MenuSep />
          <MenuItem><MenuIcon />添加到快速访问工具栏(<u>A</u>)</MenuItem>
        </ContextMenu>

        <Watermark>头条 @爆炒Office</Watermark>
      </Frame>
    </>
  );
}
